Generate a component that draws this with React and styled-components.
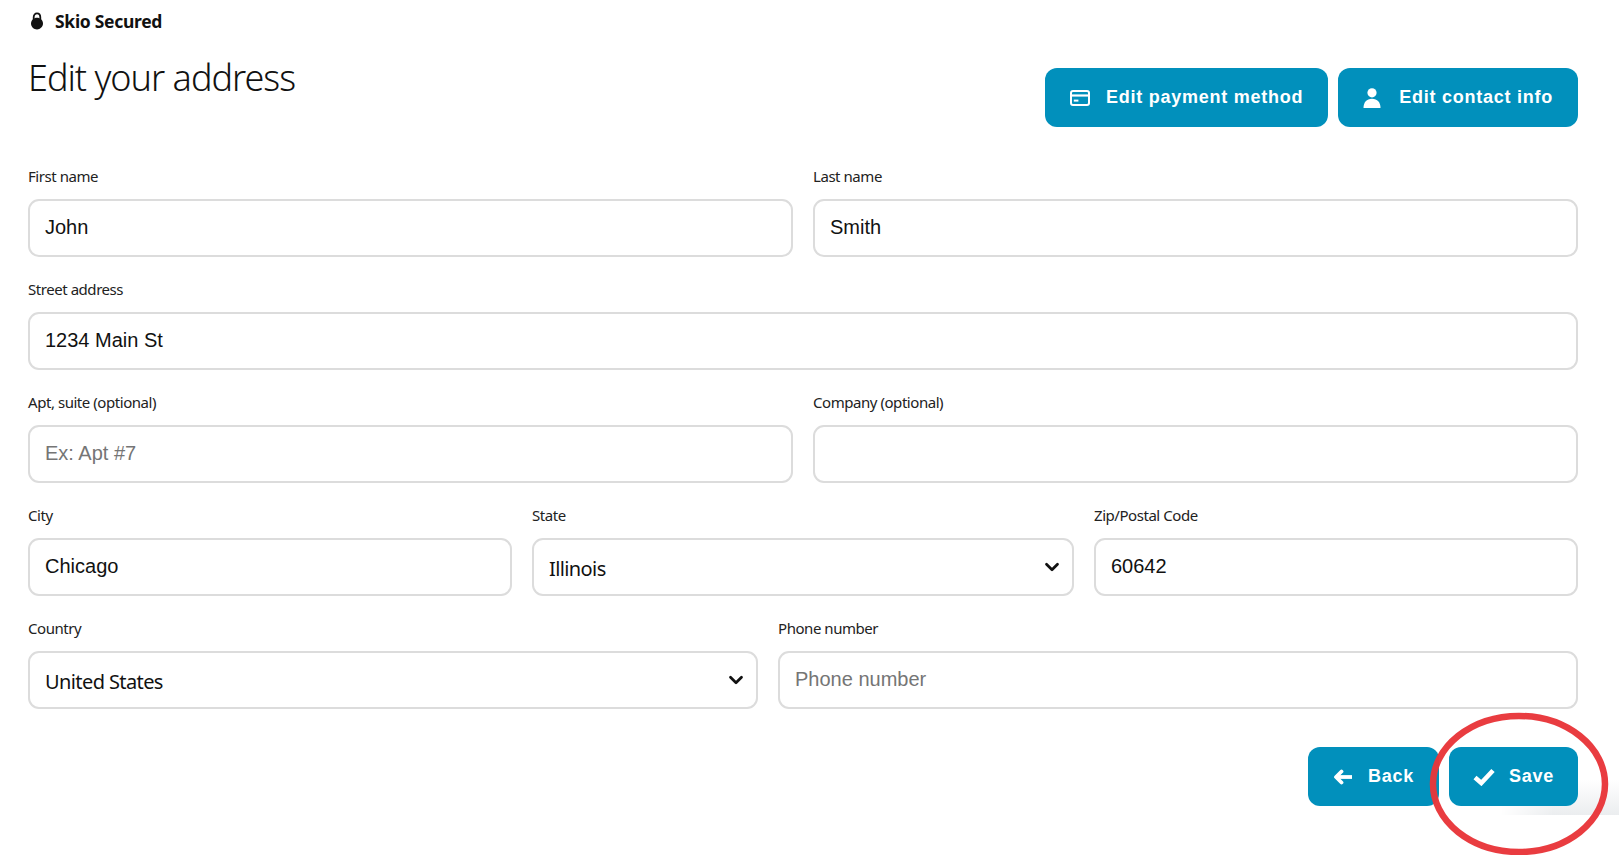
import React from 'react';
import styled, { createGlobalStyle } from 'styled-components';
import { ChevronDown } from 'lucide-react';

const GlobalStyle = createGlobalStyle`
  * {
    box-sizing: border-box;
  }

  html, body {
    margin: 0;
    background: #ffffff;
  }
`;

const LockIcon = () => (
  <svg width='14' height='18' viewBox='0 0 14 18' fill='none'>
    <path d='M3.700 9V5.200C3.700 3 5 1.400 7 1.400s3.300 1.600 3.300 3.800V9' stroke='#111' strokeWidth='1.800' />
    <path d='M7 5.800c3.300 0 6 2.700 6 5.800S10.300 17.500 7 17.500 1 14.800 1 11.600 3.700 5.800 7 5.800Z' fill='#111' />
  </svg>
);

const CardIcon = () => (
  <svg width='20' height='16' viewBox='0 0 20 16' fill='none' stroke='#fff' strokeWidth='2'>
    <rect x='1' y='1' width='18' height='14' rx='2' />
    <path d='M1 5.500H19' strokeWidth='2.200' />
    <path d='M3.800 10.600H8.400' strokeWidth='2' />
  </svg>
);

const PersonIcon = () => (
  <svg width='18' height='20' viewBox='0 0 18 20' fill='#fff'>
    <circle cx='9' cy='4.800' r='4.600' />
    <path d='M0.500 20C.5 14.500 3.600 10.800 9 10.800S17.500 14.500 17.500 20Z' />
  </svg>
);

const ArrowIcon = () => (
  <svg width='20' height='16' viewBox='0 0 20 16' fill='none' stroke='#fff' strokeWidth='3.800'>
    <path d='M19 8H4' />
    <path d='M8.500 2.500L3 8l5.500 5.500' strokeLinecap='round' strokeLinejoin='round' />
  </svg>
);

const CheckIcon = () => (
  <svg width='22' height='18' viewBox='0 0 22 18' fill='none' stroke='#fff' strokeWidth='4.600'>
    <path d='M2 9.500L8.300 15 20 2.500' />
  </svg>
);

const Select = ({ value }) => (
  <SelectWrap>
    <SelectBox defaultValue={value}>
      <option>{value}</option>
    </SelectBox>
    <Chevron size={22} strokeWidth={3} />
  </SelectWrap>
);

const Field = ({ label, flex, children }) => (
  <FieldBox $flex={flex}>
    <Label>{label}</Label>
    {children}
  </FieldBox>
);

const App = () => {
  return (
    <Page>
      <GlobalStyle />
      <Secured>
        <LockIcon />
        Skio Secured
      </Secured>

      <Header>
        <Title>Edit your address</Title>
        <ButtonRow>
          <Button $gap={16} $padding={25}>
            <CardIcon />
            Edit payment method
          </Button>
          <Button $gap={18} $padding={25}>
            <PersonIcon />
            Edit contact info
          </Button>
        </ButtonRow>
      </Header>

      <Form>
        <Row>
          <Field label='First name' flex={1}>
            <Input defaultValue='John' />
          </Field>
          <Field label='Last name' flex={1}>
            <Input defaultValue='Smith' />
          </Field>
        </Row>
        <Row>
          <Field label='Street address' flex={1}>
            <Input defaultValue='1234 Main St' />
          </Field>
        </Row>
        <Row>
          <Field label='Apt, suite (optional)' flex={1}>
            <Input placeholder='Ex: Apt #7' />
          </Field>
          <Field label='Company (optional)' flex={1}>
            <Input />
          </Field>
        </Row>
        <Row>
          <Field label='City' flex={484}>
            <Input defaultValue='Chicago' />
          </Field>
          <Field label='State' flex={542}>
            <Select value='Illinois' />
          </Field>
          <Field label='Zip/Postal Code' flex={484}>
            <Input defaultValue='60642' />
          </Field>
        </Row>
        <Row>
          <Field label='Country' flex={730}>
            <Select value='United States' />
          </Field>
          <Field label='Phone number' flex={800}>
            <Input placeholder='Phone number' />
          </Field>
        </Row>
      </Form>

      <Footer>
        <Shadow />
        <Button $gap={15} $padding={25}>
          <ArrowIcon />
          Back
        </Button>
        <Button $gap={14} $padding={24}>
          <CheckIcon />
          Save
        </Button>
        <Circle viewBox='0 0 180 146' fill='none'>
          <ellipse cx='90' cy='73' rx='86' ry='68' stroke='#e8363a' strokeOpacity='0.97' strokeWidth='6.500' />
        </Circle>
      </Footer>
    </Page>
  );
};

const Page = styled.div`
  position: relative;
  width: 1619px;
  height: 855px;
  padding: 0 41px 0 28px;
  overflow: hidden;
  background: #ffffff;
  font-family: 'Noto Sans', sans-serif;
  color: #111111;
`;

const Secured = styled.div`
  display: flex;
  align-items: center;
  gap: 11px;
  height: 42px;
  padding-left: 2px;
  font-size: 17.5px;
  font-weight: 700;
  letter-spacing: -0.3px;
`;

const Header = styled.div`
  display: flex;
  justify-content: space-between;
  align-items: flex-start;
  height: 115px;
`;

const Title = styled.h1`
  margin: 11px 0 0;
  font-size: 36px;
  font-weight: 300;
  line-height: 50px;
  letter-spacing: -1px;
`;

const ButtonRow = styled.div`
  display: flex;
  gap: 10px;
  margin-top: 26px;
`;

const Button = styled.button`
  position: relative;
  display: flex;
  align-items: center;
  gap: ${({ $gap }) => $gap}px;
  height: 59px;
  padding: 0 ${({ $padding }) => $padding}px;
  border: none;
  border-radius: 12px;
  background: #0190bc;
  color: #ffffff;
  font-family: 'Liberation Sans', Arial, sans-serif;
  font-size: 18px;
  font-weight: 700;
  letter-spacing: 0.75px;
  white-space: nowrap;
`;

const Form = styled.div`
  display: flex;
  flex-direction: column;
  gap: 13px;
`;

const Row = styled.div`
  display: flex;
  gap: 20px;
`;

const FieldBox = styled.div`
  flex: ${({ $flex }) => $flex} 1 0;
  min-width: 0;
`;

const Label = styled.div`
  height: 42px;
  padding-top: 9px;
  font-size: 15px;
  line-height: 20px;
  letter-spacing: -0.45px;
  color: #222222;
`;

const Input = styled.input`
  display: block;
  width: 100%;
  height: 58px;
  padding: 0 15px 1px;
  border: 2px solid #dcdcdc;
  border-radius: 11px;
  background: #ffffff;
  font-family: 'Liberation Sans', Arial, sans-serif;
  font-size: 20px;
  color: #111111;
  outline: none;

  &::placeholder {
    color: #757575;
    opacity: 1;
  }
`;

const SelectWrap = styled.div`
  position: relative;
`;

const SelectBox = styled.select`
  display: block;
  width: 100%;
  height: 58px;
  padding: 3px 15px 0;
  border: 2px solid #dcdcdc;
  border-radius: 11px;
  background: #ffffff;
  appearance: none;
  font-family: 'Noto Sans', sans-serif;
  font-size: 20px;
  letter-spacing: -0.6px;
  color: #111111;
  outline: none;
`;

const Chevron = styled(ChevronDown)`
  position: absolute;
  top: 18px;
  right: 11px;
  color: #111111;
`;

const Footer = styled.div`
  position: relative;
  display: flex;
  justify-content: flex-end;
  gap: 10px;
  margin-top: 38px;
`;

const Shadow = styled.div`
  position: absolute;
  top: 33px;
  right: -41px;
  width: 119px;
  height: 35px;
  background: linear-gradient(180deg, #ffffff, #ebedef);
  mask-image: linear-gradient(90deg, transparent, #000 45%);
`;

const Circle = styled.svg`
  position: absolute;
  top: -36px;
  right: -31px;
  width: 180px;
  height: 146px;
`;

export default App;
